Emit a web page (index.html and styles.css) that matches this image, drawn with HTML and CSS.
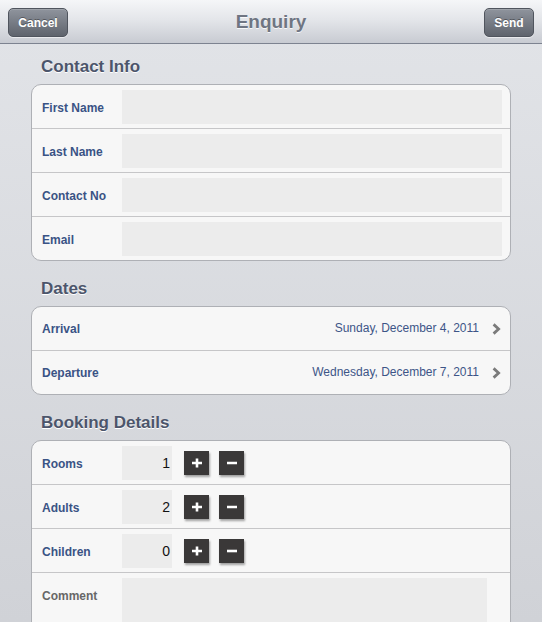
FILE: index.html
```html
<!DOCTYPE html>
<html>
<head>
<meta charset="utf-8">
<title>Enquiry</title>
<link rel="stylesheet" href="styles.css">
</head>
<body>
<header class="nav">
  <div class="nav-left"><button class="bar-btn btn-cancel">Cancel</button></div>
  <h1 class="nav-title">Enquiry</h1>
  <div class="nav-right"><button class="bar-btn btn-send">Send</button></div>
</header>
<main class="page">
  <h2 class="section-title">Contact Info</h2>
  <div class="group">
    <div class="row"><span class="label">First Name</span><span class="field"></span></div>
    <div class="row"><span class="label">Last Name</span><span class="field"></span></div>
    <div class="row"><span class="label">Contact No</span><span class="field"></span></div>
    <div class="row"><span class="label">Email</span><span class="field"></span></div>
  </div>

  <h2 class="section-title">Dates</h2>
  <div class="group">
    <div class="row">
      <span class="label label-date">Arrival</span>
      <span class="value">Sunday, December 4, 2011</span>
      <svg class="chevron" width="9" height="12" viewBox="0 0 9 12"><polyline points="1.6,1.4 6.6,6 1.6,10.6" fill="none" stroke="#7b7b7b" stroke-width="2.8"/></svg>
    </div>
    <div class="row">
      <span class="label label-date">Departure</span>
      <span class="value">Wednesday, December 7, 2011</span>
      <svg class="chevron" width="9" height="12" viewBox="0 0 9 12"><polyline points="1.6,1.4 6.6,6 1.6,10.6" fill="none" stroke="#7b7b7b" stroke-width="2.8"/></svg>
    </div>
  </div>

  <h2 class="section-title">Booking Details</h2>
  <div class="group">
    <div class="row">
      <span class="label">Rooms</span>
      <span class="num">1</span>
      <span class="step step-plus"><svg width="12" height="12" viewBox="0 0 12 12"><path d="M6 1.5V10.5M1 6H11" stroke="#fff" stroke-width="2.6"/></svg></span>
      <span class="step step-minus"><svg width="12" height="12" viewBox="0 0 12 12"><path d="M1 6H11" stroke="#fff" stroke-width="2.6"/></svg></span>
    </div>
    <div class="row">
      <span class="label">Adults</span>
      <span class="num">2</span>
      <span class="step step-plus"><svg width="12" height="12" viewBox="0 0 12 12"><path d="M6 1.5V10.5M1 6H11" stroke="#fff" stroke-width="2.6"/></svg></span>
      <span class="step step-minus"><svg width="12" height="12" viewBox="0 0 12 12"><path d="M1 6H11" stroke="#fff" stroke-width="2.6"/></svg></span>
    </div>
    <div class="row">
      <span class="label">Children</span>
      <span class="num">0</span>
      <span class="step step-plus"><svg width="12" height="12" viewBox="0 0 12 12"><path d="M6 1.5V10.5M1 6H11" stroke="#fff" stroke-width="2.6"/></svg></span>
      <span class="step step-minus"><svg width="12" height="12" viewBox="0 0 12 12"><path d="M1 6H11" stroke="#fff" stroke-width="2.6"/></svg></span>
    </div>
    <div class="row row-comment">
      <span class="label label-muted">Comment</span>
      <span class="field field-comment"></span>
    </div>
  </div>
</main>
</body>
</html>
```

FILE: styles.css
```css
html, body {
  margin: 0;
  padding: 0;
}
body {
  width: 542px;
  height: 622px;
  overflow: hidden;
  font-family: "Liberation Sans", Arial, Helvetica, sans-serif;
  background: linear-gradient(#e2e4e8, #d0d2d7);
}
.nav {
  height: 43px;
  border-bottom: 1px solid #7d8390;
  background: linear-gradient(#f5f6f8 0%, #e4e6ea 45%, #c8cbd2 100%);
  display: grid;
  grid-template-columns: 1fr auto 1fr;
  align-items: start;
  padding: 0 8px;
  box-sizing: content-box;
}
.nav-right {
  display: flex;
  justify-content: flex-end;
}
.bar-btn {
  margin-top: 8px;
  height: 29px;
  border: 1px solid #50555e;
  border-radius: 5px;
  background: linear-gradient(#8f949d, #5f646d);
  color: #fff;
  font-family: "Liberation Sans", Arial, sans-serif;
  font-weight: bold;
  font-size: 12px;
  padding: 0;
  text-shadow: 0 -1px 0 rgba(0,0,0,0.35);
  box-shadow: 0 1px 0 rgba(255,255,255,0.55), inset 0 1px 0 rgba(255,255,255,0.15);
}
.btn-cancel { width: 60px; }
.btn-send { width: 50px; }
.nav-title {
  margin: 0;
  padding-top: 1px;
  line-height: 42px;
  font-size: 19px;
  font-weight: bold;
  color: #6f7582;
  text-shadow: 0 1px 0 rgba(255,255,255,0.8);
}
.page {
  padding: 12px 31px 0;
}
.section-title {
  margin: 0 0 7px 10px;
  padding-top: 1px;
  font-size: 17px;
  line-height: 20px;
  font-weight: bold;
  color: #4c556b;
  text-shadow: 0 1px 0 #fff;
}
.group {
  border: 1px solid #aeb0b5;
  border-radius: 10px;
  background: #f7f7f7;
  overflow: hidden;
  margin-bottom: 17px;
}
.row {
  display: flex;
  align-items: flex-start;
  height: 43px;
  border-bottom: 1px solid #c6c6c8;
}
.row:last-child {
  border-bottom: none;
}
.label {
  width: 80px;
  height: 41px;
  padding: 2px 0 0 10px;
  flex: none;
  line-height: 43px;
  font-size: 12px;
  font-weight: bold;
  color: #3a5385;
}
.label-date {
  height: 42px;
  padding-top: 1px;
}
.label-muted {
  color: #676767;
}
.field {
  flex: 1;
  height: 34px;
  margin: 5px 8px 0 0;
  background: #ececec;
}
.row-comment {
  height: 120px;
}
.field-comment {
  flex: none;
  width: 365px;
  height: 110px;
}
.value {
  flex: 1;
  height: 43px;
  text-align: right;
  line-height: 43px;
  font-size: 12px;
  color: #3d5587;
}
.chevron {
  flex: none;
  margin: 16px 9px 0 13px;
}
.num {
  flex: none;
  width: 48px;
  height: 34px;
  margin-top: 5px;
  padding-right: 2px;
  background: #ececec;
  text-align: right;
  line-height: 34px;
  font-size: 14px;
  color: #111;
}
.step {
  flex: none;
  width: 25px;
  height: 24px;
  margin-top: 10px;
  background: #3a3838;
  box-shadow: 1px 2px 2px rgba(0,0,0,0.35);
  display: flex;
  align-items: center;
  justify-content: center;
}
.step-plus { margin-left: 12px; }
.step-minus { margin-left: 10px; }
```
